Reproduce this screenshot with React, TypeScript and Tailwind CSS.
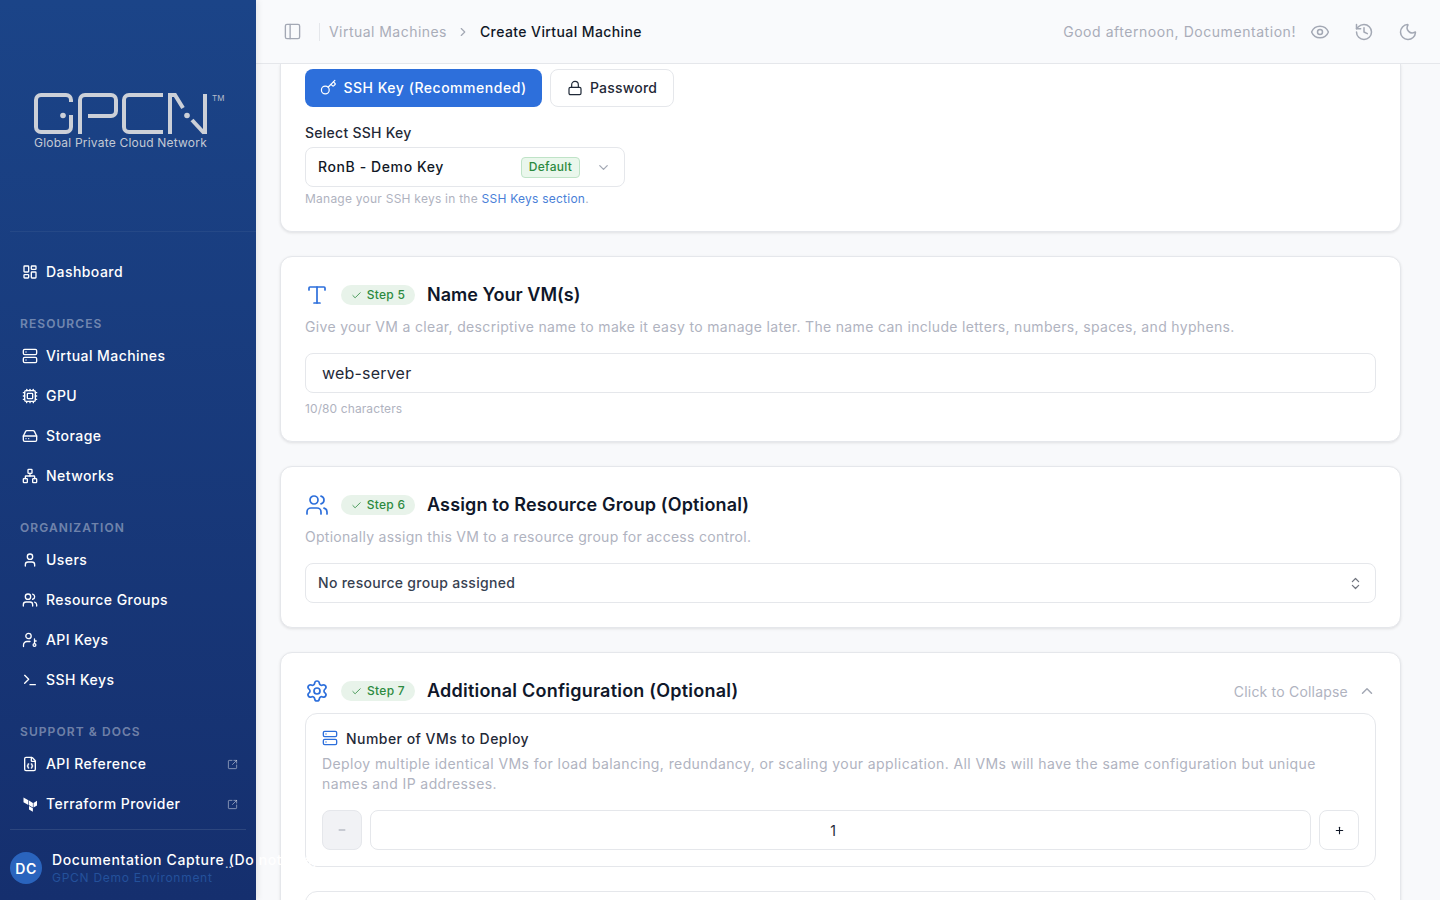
import {
  Check,
  ChevronDown,
  ChevronRight,
  ChevronUp,
  ChevronsUpDown,
  Cpu,
  Eye,
  FileJson,
  HardDrive,
  History,
  Key,
  LayoutDashboard,
  Lock,
  Minus,
  Moon,
  Network,
  PanelLeft,
  Plus,
  Server,
  Settings,
  SquareArrowOutUpRight,
  Terminal,
  Type,
  User,
  Users,
} from "lucide-react";
import type { ReactNode } from "react";

function GpcnLogo() {
  return (
    <svg width="174" height="42" viewBox="0 0 174 42" fill="none" stroke="#ccd0d8" strokeWidth="4">
      <path d="M37 9V7a5 5 0 0 0-5-5H7a5 5 0 0 0-5 5v27a5 5 0 0 0 5 5h25a5 5 0 0 0 5-5V22" />
      <circle cx="29" cy="22.500" r="2.800" fill="#ccd0d8" stroke="none" />
      <path d="M46 41V7a5 5 0 0 1 5-5h26a5 5 0 0 1 5 5v11a5 5 0 0 1-5 5H54" />
      <path d="M129 2H95a5 5 0 0 0-5 5v27a5 5 0 0 0 5 5h34" />
      <path d="M136 41V2h5l8 13" />
      <circle cx="153" cy="22.500" r="2.800" fill="#ccd0d8" stroke="none" />
      <path d="M158 27l12 13" />
      <path d="M171 41V1" />
    </svg>
  );
}

function TerraformIcon() {
  return (
    <svg width="16" height="16" viewBox="0 0 16 16" fill="white">
      <path d="M1.500 1.500l4.900 2.800v4.800L1.500 6.300z" />
      <path d="M7 4.600l3.900 2.300v4.700L7 9.300z" />
      <path d="M7 10l3.900 2.300v3.400L7 13.400z" />
      <path d="M11.500 6.900L15 4.800v4.700l-3.500 2.100z" />
    </svg>
  );
}

function ApiKeyIcon() {
  return (
    <svg width="16" height="16" viewBox="0 0 16 16" fill="none" stroke="white" strokeWidth="1.300" strokeLinecap="round">
      <circle cx="6.500" cy="4" r="2.700" />
      <path d="M1.500 14.500v-1.500a3.500 3.500 0 0 1 3.500-3.500h3" />
      <circle cx="12.500" cy="13" r="1.400" />
      <path d="M12.500 11.600V7M12.500 9h1.700" />
    </svg>
  );
}

function NavItem({ icon, label, external }: { icon: ReactNode; label: string; external?: boolean }) {
  return (
    <div className="flex h-10 items-center gap-2 px-3 text-[14px] font-medium tracking-[0.44px] text-white">
      <span className="flex w-4 justify-center">{icon}</span>
      <span className="flex-1 pb-[2px]">{label}</span>
      {external && <SquareArrowOutUpRight size={11} className="-mr-[4px] text-white/50" />}
    </div>
  );
}

function NavLabel({ children }: { children: ReactNode }) {
  return (
    <div className="mt-6 mb-1 h-4 px-[10px] text-[12px] leading-4 font-semibold tracking-[1.08px] text-white/40">
      {children}
    </div>
  );
}

function Sidebar() {
  return (
    <aside className="relative z-10 flex h-screen w-64 shrink-0 flex-col bg-gradient-to-b from-[#1b4488] to-[#152f6e] shadow-[2px_0_6px_rgba(0,0,0,0.08)]">
      <div className="ml-[10px] h-[232px] border-b border-white/5 pt-[93px] pl-6">
        <div className="relative w-[174px]">
          <GpcnLogo />
          <span className="absolute top-[1px] left-[178px] text-[8px] leading-[8px] text-[#b5bdcc]">TM</span>
          <p className="mt-[1px] text-[12px] leading-[14px] whitespace-nowrap tracking-[0.2px] text-[#c3c9d4]">
            Global Private Cloud Network
          </p>
        </div>
      </div>
      <nav className="flex-1 px-[10px] pt-5">
        <NavItem icon={<LayoutDashboard size={16} />} label="Dashboard" />
        <NavLabel>RESOURCES</NavLabel>
        <NavItem icon={<Server size={16} />} label="Virtual Machines" />
        <NavItem icon={<Cpu size={16} />} label="GPU" />
        <NavItem icon={<HardDrive size={16} />} label="Storage" />
        <NavItem icon={<Network size={16} />} label="Networks" />
        <NavLabel>ORGANIZATION</NavLabel>
        <NavItem icon={<User size={16} />} label="Users" />
        <NavItem icon={<Users size={16} />} label="Resource Groups" />
        <NavItem icon={<ApiKeyIcon />} label="API Keys" />
        <NavItem icon={<Terminal size={16} />} label="SSH Keys" />
        <NavLabel>SUPPORT &amp; DOCS</NavLabel>
        <NavItem icon={<FileJson size={16} />} label="API Reference" external />
        <NavItem icon={<TerraformIcon />} label="Terraform Provider" external />
      </nav>
      <div className="relative mx-[10px] flex h-[71px] items-center gap-[10px] border-t border-white/10 pt-[6px]">
        <div className="flex h-8 w-8 shrink-0 items-center justify-center rounded-full bg-[#2a64bd] text-[14px] font-semibold tracking-[0.5px] text-white">
          DC
        </div>
        <div className="whitespace-nowrap">
          <p className="text-[14px] leading-[18px] font-medium tracking-[0.62px] text-white">
            Documentation Capture (Do not use)
          </p>
          <p className="text-[12px] leading-[17px] tracking-[0.72px] text-[#24519b]">GPCN Demo Environment</p>
        </div>
        <span className="absolute top-[26px] left-[215px] text-[12px] leading-4 text-white/80">..</span>
      </div>
    </aside>
  );
}

function TopBar() {
  return (
    <header className="flex h-16 shrink-0 items-center border-b border-[#e5e7eb] bg-[#f9fafc] pr-[22px] pl-[27px] text-[14px]">
      <PanelLeft size={19} strokeWidth={1.700} className="text-[#a3a8b4]" />
      <span className="mr-[9px] ml-[17px] h-[18px] w-px bg-[#e5e7eb]" />
      <span className="tracking-[0.46px] text-[#a9adb9]">Virtual Machines</span>
      <ChevronRight size={14} className="mx-[9px] text-[#a3a8b4]" />
      <span className="ml-[1px] tracking-[0.4px] font-medium text-[#111827]">Create Virtual Machine</span>
      <span className="ml-auto tracking-[0.55px] text-[#a9adb9]">Good afternoon, Documentation!</span>
      <div className="ml-[14px] flex items-center gap-[24px] text-[#a3a8b4]">
        <Eye size={20} strokeWidth={1.800} />
        <History size={20} strokeWidth={1.800} />
        <Moon size={20} strokeWidth={1.800} />
      </div>
    </header>
  );
}

function Card({ children }: { children: ReactNode }) {
  return (
    <section className="rounded-xl border border-[#e5e7eb] bg-white px-6 pt-6 pb-6 shadow-[0_1px_3px_rgba(0,0,0,0.1)]">
      {children}
    </section>
  );
}

function StepHeader({ icon, step, title, tracking, right }: { icon: ReactNode; step: number; title: string; tracking: string; right?: ReactNode }) {
  return (
    <div className="flex h-7 items-center">
      <span className="flex w-6 justify-center text-[#2d6fdb]">{icon}</span>
      <span className="ml-3 flex h-5 w-[74px] items-center justify-center gap-[5px] rounded-full bg-[#e8f3ea] text-[12px] font-medium tracking-[0.3px] text-[#2c8a3f]">
        <Check size={11} strokeWidth={1.800} />
        Step {step}
      </span>
      <h2 className={`ml-3 pb-[2px] text-[18px] font-semibold text-[#0f172a] ${tracking}`}>{title}</h2>
      {right}
    </div>
  );
}

function Content() {
  return (
    <div className="min-h-0 flex-1 overflow-hidden pr-[39px] pl-[24px]">
      <div className="flex flex-col gap-6">
        <section className="rounded-b-xl border-x border-b border-[#e5e7eb] bg-white px-6 pt-[5px] pb-6 shadow-[0_1px_3px_rgba(0,0,0,0.1)]">
          <div className="flex gap-2 text-[14px]">
            <button className="flex h-[38px] w-[237px] items-center justify-center gap-[6px] rounded-lg bg-[#2d6fdb] pb-[1px] font-medium tracking-[0.52px] text-white">
              <Key size={17} strokeWidth={1.700} />
              SSH Key (Recommended)
            </button>
            <button className="flex h-[38px] w-[124px] items-center justify-center gap-[7px] rounded-lg border border-[#e5e7eb] pb-[1px] font-medium tracking-[0.2px] text-[#1f2937]">
              <Lock size={16} strokeWidth={1.800} />
              Password
            </button>
          </div>
          <p className="mt-[16px] text-[14px] leading-5 font-medium tracking-[0.26px] text-[#1f2937]">Select SSH Key</p>
          <div className="mt-[4px] flex h-10 w-80 items-center rounded-lg border border-[#e5e7eb] pr-[13px] pl-[12px] text-[14px]">
            <span className="flex-1 pb-[2px] font-medium tracking-[0.6px] text-[#111827]">RonB - Demo Key</span>
            <span className="flex h-[21px] w-[59px] items-center justify-center rounded border border-[#bfe3c7] bg-[#eaf7ec] text-[12px] font-medium tracking-[0.3px] text-[#2c8a3f]">
              Default
            </span>
            <ChevronDown size={15} className="ml-[16px] text-[#a3a8b4]" />
          </div>
          <p className="mt-[4px] text-[12px] leading-4 tracking-[0.24px] text-[#b0b3bf]">
            Manage your SSH keys in the <span className="text-[#4a7fd8]">SSH Keys section</span>.
          </p>
        </section>

        <Card>
          <StepHeader icon={<Type size={24} strokeWidth={1.700} />} step={5} title="Name Your VM(s)" tracking="tracking-[0.02px]" />
          <p className="mt-[8px] text-[14px] leading-5 tracking-[0.33px] text-[#b0b3bf]">
            Give your VM a clear, descriptive name to make it easy to manage later. The name can include letters, numbers, spaces, and hyphens.
          </p>
          <div className="mt-4 flex h-10 items-center rounded-lg border border-[#e5e7eb] px-4 text-[16px] tracking-[0.2px] text-[#1f2937]">
            web-server
          </div>
          <p className="mt-2 text-[12px] leading-4 tracking-[0.1px] text-[#b0b3bf]">10/80 characters</p>
        </Card>

        <Card>
          <StepHeader icon={<Users size={24} strokeWidth={1.700} />} step={6} title="Assign to Resource Group (Optional)" tracking="tracking-[0.14px]" />
          <p className="mt-[8px] text-[14px] leading-5 tracking-[0.28px] text-[#b0b3bf]">
            Optionally assign this VM to a resource group for access control.
          </p>
          <div className="mt-4 flex h-10 items-center justify-between rounded-lg border border-[#e5e7eb] pr-[12px] pl-[12px] text-[14px] font-medium tracking-[0.3px] text-[#374151]">
            <span className="pb-[2px]">No resource group assigned</span>
            <ChevronsUpDown size={15} className="text-[#71757f]" />
          </div>
        </Card>

        <Card>
          <StepHeader
            icon={<Settings size={24} strokeWidth={1.700} />}
            step={7}
            title="Additional Configuration (Optional)"
            tracking="tracking-[0.22px]"
            right={
              <span className="ml-auto flex items-center gap-[10px] text-[14px] tracking-[0.2px] text-[#b0b3bf]">
                Click to Collapse
                <ChevronUp size={18} className="text-[#a3a8b4]" />
              </span>
            }
          />
          <div className="mt-2 rounded-xl border border-[#e5e7eb] px-4 pt-4 pb-4">
            <div className="flex h-4 items-center gap-2 text-[14px] font-medium tracking-[0.46px] text-[#1f2937]">
              <Server size={16} className="text-[#2d6fdb]" />
              <span>Number of VMs to Deploy</span>
            </div>
            <p className="mt-[8px] text-[14px] leading-5 tracking-[0.4px] text-[#b0b3bf]">
              Deploy multiple identical VMs for load balancing, redundancy, or scaling your application. All VMs will have the same configuration but unique names and IP addresses.
            </p>
            <div className="mt-4 flex gap-2">
              <div className="flex h-10 w-10 shrink-0 items-center justify-center rounded-lg border border-[#e5e7eb] bg-[#f1f2f5] text-[#8d93a0]">
                <Minus size={10} />
              </div>
              <div className="flex h-10 flex-1 items-center justify-center rounded-lg border border-[#e5e7eb] pr-[15px] text-[14px] text-[#1f2937]">1</div>
              <div className="flex h-10 w-10 shrink-0 items-center justify-center rounded-lg border border-[#e5e7eb] text-[#111827]">
                <Plus size={11} strokeWidth={2.400} />
              </div>
            </div>
          </div>
          <div className="mt-6 h-24 rounded-xl border border-[#e5e7eb]" />
        </Card>
      </div>
    </div>
  );
}

export default function App() {
  return (
    <div className="flex h-screen overflow-hidden bg-[#f8f9fb] font-[family-name:Inter,sans-serif]">
      <Sidebar />
      <main className="flex min-w-0 flex-1 flex-col">
        <TopBar />
        <Content />
      </main>
    </div>
  );
}
